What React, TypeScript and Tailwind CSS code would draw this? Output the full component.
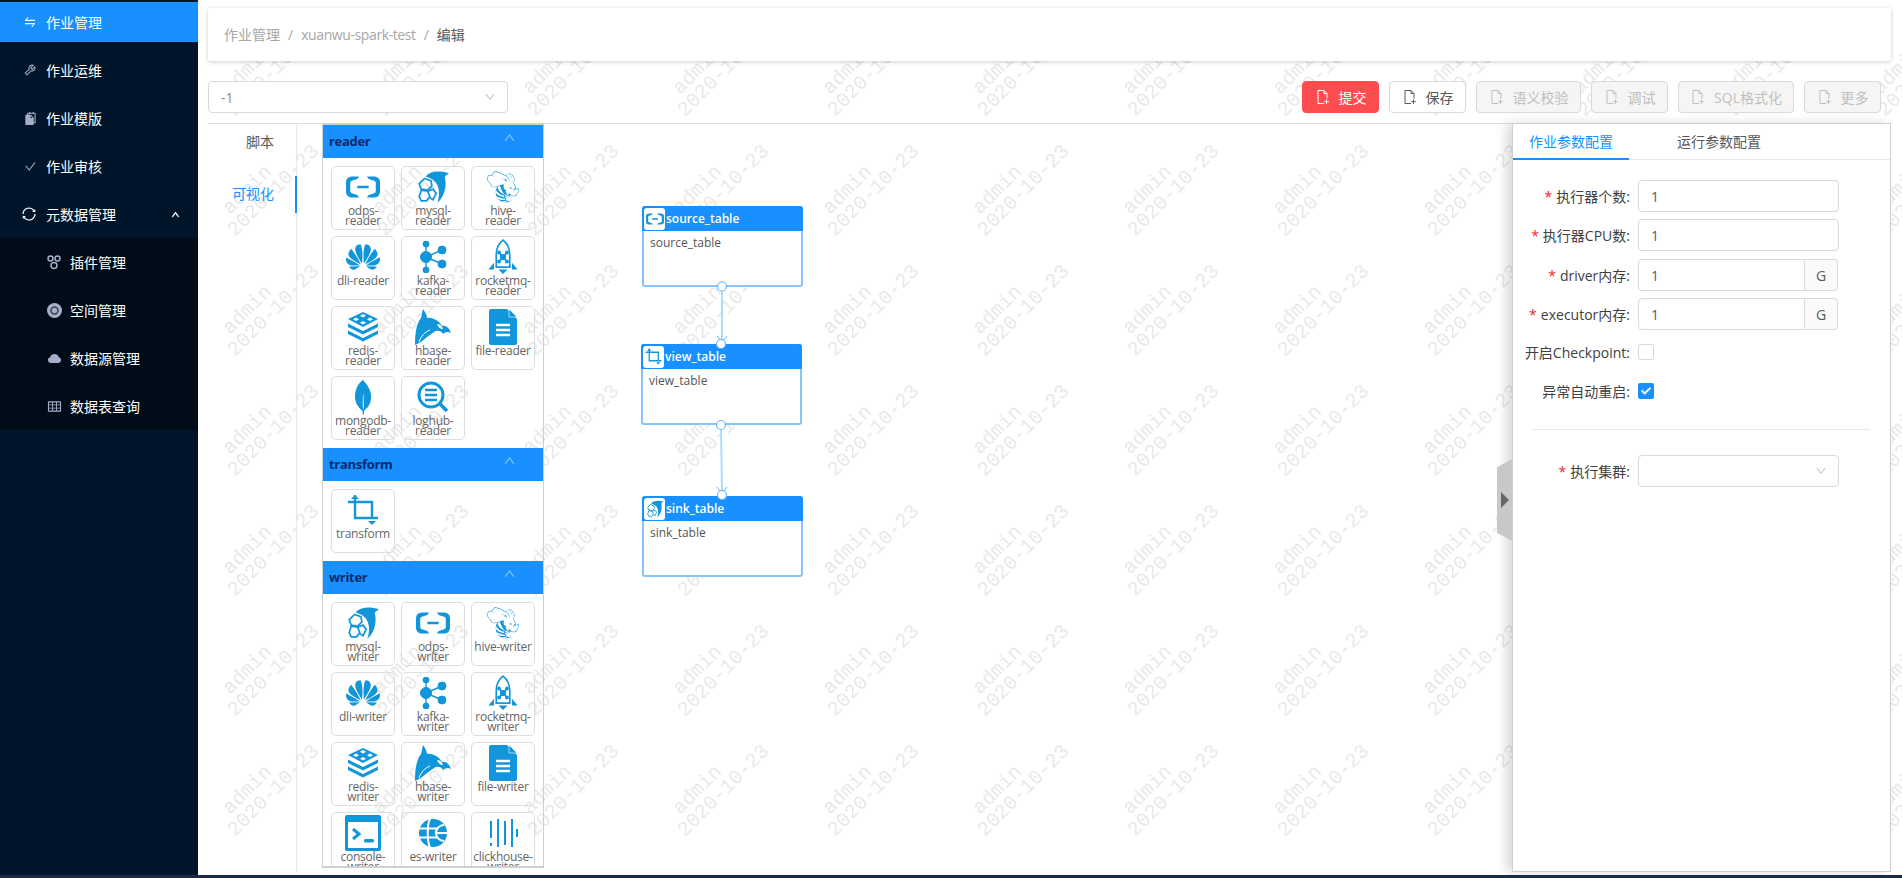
import React from "react";
import { AiOutlineSwap, AiOutlineTool, AiOutlineCheck, AiOutlineSync, AiFillCloud, AiOutlineTable, AiOutlineDown, AiOutlineUp, AiFillSnippets } from "react-icons/ai";
import { FaCheck } from "react-icons/fa";
import { SiAlibabacloud, SiApachehive, SiHuawei, SiMongodb } from "react-icons/si";

const ui = { fontFamily: '"Open Sans","Noto Sans CJK SC",sans-serif' };
const B = "#1296db";

function Rocket({ size = 36 }: { size?: number }) {
  return (
    <svg width={size} height={size} viewBox="0 0 32 32" fill="none" stroke={B} strokeWidth="1.5">
      <path d="M16 1c4 3 6 8 6 13v11H10V14c0-5 2-10 6-13z" />
      <path d="M12.5 12l7 8M19.5 12l-7 8" />
      <circle cx="16" cy="16" r="2" fill={B} />
      <circle cx="12.5" cy="12" r="1" fill={B} />
      <circle cx="19.5" cy="12" r="1" fill={B} />
      <circle cx="12.5" cy="20" r="1" fill={B} />
      <circle cx="19.5" cy="20" r="1" fill={B} />
      <path d="M3 27l5-6v6zM29 27l-5-6v6zM12 27h8l-4 4z" fill={B} stroke="none" />
    </svg>
  );
}
function Dolphin({ size = 34 }: { size?: number }) {
  return (
    <svg width={size} height={size} viewBox="0 0 32 32">
      <path d="M9 6C13 1 22 0 31 3l-4 3c2 7 1 18-7 25 3-8 2-17-3-21-2-2-5-3-8-4z" fill={B} />
      <g fill="none" stroke={B} strokeWidth="1.6">
        <path d="M8 8l6 2 1 5-4 4-6-1-2-5z" />
        <path d="M5 19l6 1 2 5-3 4H5l-2-4z" />
        <path d="M11 20l5-2 3 4-3 6-3-2" />
      </g>
    </svg>
  );
}
function Redis({ size = 32 }: { size?: number }) {
  return (
    <svg width={size} height={size} viewBox="0 0 32 32" fill={B}>
      <path d="M16 1l15 7-15 8L1 8z" />
      <path d="M1 12.5L16 20l15-7.500V16l-15 7.500L1 16z" />
      <path d="M1 19.500L16 27l15-7.500V23l-15 7.500L1 23z" />
      <g fill="#fff">
        <path d="M16 3l3 1.800-3 1.800-3-1.800z" />
        <path d="M9 6.500l3 1.800-3 1.800-3-1.800z" />
        <path d="M23 6.500l3 1.800-3 1.800-3-1.800z" />
        <path d="M16 10l3 1.800-3 1.800-3-1.800z" />
      </g>
    </svg>
  );
}
function Kafka({ size = 32 }: { size?: number }) {
  return (
    <svg width={size * 0.875} height={size} viewBox="0 0 28 32" fill={B} stroke={B}>
      <path d="M7 3v26M7 16L23 9M7 16l16 7" strokeWidth="1.4" fill="none" />
      <circle cx="7" cy="3" r="3" />
      <circle cx="7" cy="16" r="5.500" />
      <circle cx="23" cy="9" r="4" />
      <circle cx="23" cy="23" r="4" />
      <circle cx="7" cy="29" r="3" />
    </svg>
  );
}
function Orca({ size = 36 }: { size?: number }) {
  return (
    <svg width={size} height={size} viewBox="0 0 36 36" fill={B}>
      <path d="M8 0c2 3 4 6 4 9 6-1 12 3 15 8 3-1 7 1 9 7-3-2-6-1-8 1-2-4-6-4-9-2-5 3-9 7-13 10l-6 3c0-10 1-21 6-27 1-3 1-6 2-9z" />
      <path d="M22 15c3 0 5 2 6 5-3 0-5-2-6-5z" fill="#fff" />
      <path d="M4 33c2-6 6-10 11-12" fill="none" stroke="#fff" strokeWidth="1" />
    </svg>
  );
}
function FileDoc({ size = 36 }: { size?: number }) {
  return (
    <svg width={size} height={size} viewBox="0 0 28 36">
      <path d="M2 0h16l10 10v24a2 2 0 0 1-2 2H2a2 2 0 0 1-2-2V2a2 2 0 0 1 2-2z" fill={B} />
      <path d="M20 0l8 8h-8z" fill={B} stroke="#fff" strokeWidth=".6" />
      <path d="M7 16h14M7 21h14M7 26h14" stroke="#fff" strokeWidth="2.600" />
    </svg>
  );
}
function Loghub({ size = 32 }: { size?: number }) {
  return (
    <svg width={size} height={size} viewBox="0 0 32 32" fill="none" stroke={B}>
      <circle cx="14" cy="14" r="12" strokeWidth="3" />
      <path d="M23 23l7 7" strokeWidth="3.500" />
      <path d="M8 9h12M8 14h12M8 19h12" strokeWidth="2.400" />
    </svg>
  );
}
function Crop({ size = 32 }: { size?: number }) {
  return (
    <svg width={size} height={size} viewBox="0 0 32 32" fill="none" stroke={B} strokeWidth="2.400">
      <path d="M1 8h24v15M8 1v23h23" />
      <path d="M4 5l4-4 4 4z" fill={B} stroke="none" />
      <path d="M21 27l4 4 4-4z" fill={B} stroke="none" />
    </svg>
  );
}
function Console({ size = 36 }: { size?: number }) {
  return (
    <svg width={size} height={size} viewBox="0 0 36 36">
      <rect width="36" height="36" rx="2" fill={B} />
      <rect x="3" y="7" width="30" height="26" fill="#fff" />
      <path d="M8 14l6 5-6 5" fill="none" stroke={B} strokeWidth="3" />
      <rect x="19" y="24" width="10" height="3.500" rx="1.500" fill={B} />
    </svg>
  );
}
function Es({ size = 28 }: { size?: number }) {
  return (
    <svg width={size} height={size} viewBox="0 0 28 28">
      <circle cx="14" cy="14" r="14" fill={B} />
      <path d="M0 9.500h18M0 18.500h18M28 14H17M25 6a8 8 0 0 0-8 8 8 8 0 0 0 8 8" fill="none" stroke="#fff" strokeWidth="2" />
      <path d="M11 0c-3 5-3 23 0 28" fill="none" stroke="#fff" strokeWidth="2" />
    </svg>
  );
}
function Clickhouse({ size = 30 }: { size?: number }) {
  return (
    <svg width={size} height={size} viewBox="0 0 30 30" stroke={B} strokeWidth="2">
      <path d="M3 3v17M3 25v3M10 1v28M17 3v24M24 1v28M29 11v8" />
    </svg>
  );
}
function FileAdd({ size = 16 }: { size?: number }) {
  return (
    <svg width={size} height={size} viewBox="0 0 16 16" fill="none" stroke="currentColor" strokeWidth="1">
      <path d="M9 14.500H3V1.500h6l3 3v5" />
      <path d="M9 1.500v3h3" />
      <path d="M11.500 10.500v4.500M9.200 12.700h4.600" />
    </svg>
  );
}

type Tile = { n: string; i: React.ReactNode };
const ali = <SiAlibabacloud size={34} color={B} />;
const hive = <SiApachehive size={32} color={B} />;
const hw = <SiHuawei size={34} color={B} />;
const R: Tile[] = [
  { n: "odps-reader", i: ali },
  { n: "mysql-reader", i: <Dolphin /> },
  { n: "hive-\nreader", i: hive },
  { n: "dli-reader", i: hw },
  { n: "kafka-reader", i: <Kafka /> },
  { n: "rocketmq-reader", i: <Rocket /> },
  { n: "redis-reader", i: <Redis /> },
  { n: "hbase-reader", i: <Orca /> },
  { n: "file-reader", i: <FileDoc /> },
  { n: "mongodb-reader", i: <SiMongodb size={36} color={B} /> },
  { n: "loghub-reader", i: <Loghub /> },
];
const W: Tile[] = [
  { n: "mysql-writer", i: <Dolphin /> },
  { n: "odps-\nwriter", i: ali },
  { n: "hive-writer", i: hive },
  { n: "dli-writer", i: hw },
  { n: "kafka-writer", i: <Kafka /> },
  { n: "rocketmq-writer", i: <Rocket /> },
  { n: "redis-\nwriter", i: <Redis /> },
  { n: "hbase-writer", i: <Orca /> },
  { n: "file-writer", i: <FileDoc /> },
  { n: "console-writer", i: <Console /> },
  { n: "es-writer", i: <Es /> },
  { n: "clickhouse-writer", i: <Clickhouse /> },
];

function TileBox({ n, i }: Tile) {
  return (
    <div className="w-[64px] h-[64px] rounded-[5px] border border-[#dddddd] flex flex-col items-center pt-[1px] overflow-hidden">
      <div className="h-[38px] shrink-0 flex items-center justify-center">{i}</div>
      <div className="text-[12px] leading-[10px] tracking-[-0.25px] text-[#666] text-center w-[62px] break-words whitespace-pre-line">{n}</div>
    </div>
  );
}
function Section({ title, tiles }: { title: string; tiles: Tile[] }) {
  return (
    <div>
      <div className="h-[33px] bg-[#1890ff] flex items-center justify-between pl-[6px] pr-[27px]">
        <span className="font-bold text-[13px] tracking-[-0.3px] text-[#0b2a6e] pt-[1px]">{title}</span>
        <AiOutlineUp size={13} color="#8cc8ff" className="mb-[8px]" />
      </div>
      <div className="grid grid-cols-[64px_64px_64px] gap-[6px] pl-[8px] pt-[8px] pb-[8px]">
        {tiles.map((t) => (
          <TileBox key={t.n} {...t} />
        ))}
      </div>
    </div>
  );
}

function Node({ name, icon, className }: { name: string; icon: React.ReactNode; className: string }) {
  return (
    <div className={"absolute w-[161px] h-[81px] rounded-[3px] border-2 border-[#85c4ff] bg-white " + className}>
      <div className="-mx-[2px] -mt-[2px] h-[25px] bg-[#1890ff] rounded-t-[3px] flex items-center text-white text-[12px] leading-none font-semibold">
        <span className="w-[21px] h-[22px] ml-[2px] bg-white rounded-[3px] flex items-center justify-center shrink-0">{icon}</span>
        <span className="ml-[1px]">{name}</span>
      </div>
      <div className="px-[6px] pt-[3px] text-[12px] text-[#555]">{name}</div>
    </div>
  );
}

function SideItem({ icon, label, active, sub }: { icon: React.ReactNode; label: string; active?: boolean; sub?: boolean }) {
  return (
    <div className={"h-[40px] flex items-center text-[14px] text-white mb-[8px] " + (active ? "bg-[#1890ff] " : "") + (sub ? "pl-[46px]" : "pl-[22px]")}>
      <span className={"w-[16px] flex justify-center mr-[8px] " + (active ? "" : "text-[#a6adc8]")}>{icon}</span>
      <span>{label}</span>
    </div>
  );
}

function Btn({ label, kind, className }: { label: string; kind: "red" | "plain" | "off"; className: string }) {
  const cls =
    kind === "red"
      ? "bg-[#ff4d4f] text-white border-[#ff4d4f]"
      : kind === "plain"
      ? "bg-white text-[#595959] border-[#d9d9d9]"
      : "bg-[#f5f5f5] text-[#bfbfbf] border-[#d9d9d9]";
  return (
    <div className={"h-[32px] rounded-[4px] border flex items-center justify-center gap-[8px] text-[14px] " + cls + " " + className}>
      <FileAdd />
      <span>{label}</span>
    </div>
  );
}

function Label({ label, req }: { label: string; req?: boolean }) {
  return (
    <div className="w-[125px] text-right text-[14px] text-[#404040] whitespace-nowrap pr-[8px]">
      {req && <span className="text-[#f5222d] mr-[4px]">*</span>}
      {label}:
    </div>
  );
}

function Field({ label, req, unit, className = "mb-[7px]" }: { label: string; req?: boolean; unit?: boolean; className?: string }) {
  return (
    <div className={"flex items-center h-[32px] " + className}>
      <Label label={label} req={req} />
      {unit ? (
        <div className="w-[200px] h-[32px] flex text-[14px] text-[#595959]">
          <div className="w-[167px] border border-[#d9d9d9] rounded-l-[4px] pl-[12px] flex items-center">1</div>
          <div className="w-[33px] border border-l-0 border-[#d9d9d9] rounded-r-[4px] bg-[#fafafa] flex items-center justify-center">G</div>
        </div>
      ) : (
        <div className="w-[201px] h-[32px] border border-[#d9d9d9] rounded-[4px] pl-[12px] flex items-center text-[14px] text-[#595959]">1</div>
      )}
    </div>
  );
}

function Watermark() {
  const marks: React.ReactNode[] = [];
  for (let k = -4; k < 8; k++) {
    for (let j = -1; j < 6; j++) {
      const x = 632 + 150 * k;
      const y = 215 + 120 * j;
      marks.push(
        <g key={k + "_" + j} transform={`rotate(-45 ${x} ${y})`}>
          <text x={x} y={y}>admin</text>
          <text x={x - 12} y={y + 19}>2020-10-23</text>
        </g>
      );
    }
  }
  return (
    <svg className="absolute inset-0 w-full h-full pointer-events-none" aria-hidden="true" fill="#e9e9e9" fontSize="20" fontFamily="'Liberation Mono',monospace">
      {marks}
    </svg>
  );
}

export default function App() {
  return (
    <div className="w-[1902px] h-[878px] flex flex-col overflow-hidden bg-white" style={ui}>
      <div className="h-[875px] flex shrink-0">
        <aside className="w-[198px] h-full bg-[#00152a] shrink-0 pt-[2px]">
          <SideItem active icon={<AiOutlineSwap size={14} />} label="作业管理" />
          <SideItem icon={<AiOutlineTool size={14} />} label="作业运维" />
          <SideItem icon={<AiFillSnippets size={15} />} label="作业模版" />
          <SideItem icon={<AiOutlineCheck size={13} />} label="作业审核" />
          <div className="h-[40px] flex items-center text-[14px] text-white pl-[21px]">
            <AiOutlineSync size={16} className="mr-[9px]" />
            <span>元数据管理</span>
            <AiOutlineUp size={9} stroke="currentColor" strokeWidth={80} className="ml-[55px]" />
          </div>
          <div className="bg-[#000c17] mt-[4px] pt-[4px] h-[192px]">
            <SideItem
              sub
              icon={
                <svg width="14" height="15" viewBox="0 0 14 15" fill="none" stroke="currentColor" strokeWidth="1.500">
                  <circle cx="3.500" cy="3.500" r="2.500" />
                  <circle cx="10.500" cy="3.500" r="2.500" />
                  <circle cx="7" cy="10.500" r="3" />
                </svg>
              }
              label="插件管理"
            />
            <SideItem
              sub
              icon={
                <svg width="15" height="15" viewBox="0 0 15 15">
                  <circle cx="7.500" cy="7.500" r="7.500" fill="currentColor" />
                  <circle cx="7.500" cy="7.500" r="3.500" fill="none" stroke="#3a3f55" strokeWidth="1.500" />
                </svg>
              }
              label="空间管理"
            />
            <SideItem sub icon={<AiFillCloud size={15} />} label="数据源管理" />
            <SideItem sub icon={<AiOutlineTable size={15} />} label="数据表查询" />
          </div>
        </aside>

        <main className="relative flex-1 h-full overflow-hidden">
          <Watermark />
          <div className="relative h-full pl-[10px] pr-[11px] pt-[8px] flex flex-col">
            <div className="h-[53px] bg-white rounded-[2px] shadow-[0_1px_4px_rgba(0,0,0,0.2)] flex items-center pl-[16px] text-[14px] text-[#a6a6a6] shrink-0">
              作业管理<span className="mx-[8px]">/</span>
              <span className="tracking-[-0.4px]">xuanwu-spark-test</span>
              <span className="mx-[8px]">/</span>
              <span className="text-[#595959]">编辑</span>
            </div>

            <div className="mt-[20px] h-[32px] flex items-center shrink-0">
              <div className="w-[300px] h-[32px] border border-[#d9d9d9] rounded-[4px] flex items-center justify-between pl-[12px] pr-[11px] text-[14px] text-[#8c8c8c] bg-white">
                <span>-1</span>
                <AiOutlineDown size={12} color="#bfbfbf" />
              </div>
              <div className="ml-auto flex mr-[10px] gap-[10px]">
                <Btn kind="red" label="提交" className="w-[77px]" />
                <Btn kind="plain" label="保存" className="w-[77px]" />
                <Btn kind="off" label="语义校验" className="w-[105px]" />
                <Btn kind="off" label="调试" className="w-[77px]" />
                <Btn kind="off" label="SQL格式化" className="w-[116px]" />
                <Btn kind="off" label="更多" className="w-[77px]" />
              </div>
            </div>

            <div className="mt-[10px] flex-1 min-h-0 border-t border-[#e0e0e0] flex relative">
              <div className="w-[89px] shrink-0 border-r border-[#e8e8e8] relative text-[14px] h-[748px] text-right pr-[22px]">
                <div className="h-[34px] flex items-center justify-end text-[#595959]">脚本</div>
                <div className="h-[36px] mt-[17px] flex items-center justify-end text-[#1890ff]">可视化</div>
                <div className="absolute right-[-1px] top-[52px] w-[2px] h-[37px] bg-[#1890ff]" />
              </div>

              <div className="ml-[25px] -mt-[1px] w-[222px] h-[745px] border border-y-2 border-[#cfcfcf] overflow-hidden shrink-0">
                <Section title="reader" tiles={R} />
                <Section title="transform" tiles={[{ n: "transform", i: <Crop /> }]} />
                <Section title="writer" tiles={W} />
              </div>

              <div className="flex-1 relative">
                <Node className="left-[98px] top-[82px]" name="source_table" icon={<SiAlibabacloud size={18} color={B} />} />
                <Node className="left-[97px] top-[220px]" name="view_table" icon={<Crop size={17} />} />
                <Node className="left-[98px] top-[372px]" name="sink_table" icon={<Dolphin size={18} />} />
                <svg className="absolute left-[140px] top-[150px] w-[100px] h-[240px]" fill="none">
                  <path d="M38 17L38 66M37 155L38 217" stroke="#aedcff" strokeWidth="2" />
                  <path d="M33 62l5 6 5-6M33 213l5 6 5-6" stroke="#69b4ff" strokeWidth="1" />
                  <g fill="#fff" stroke="#69b4ff" strokeWidth="1.200">
                    <circle cx="38" cy="12.500" r="4.500" />
                    <circle cx="37" cy="70" r="4.500" />
                    <circle cx="37" cy="151" r="4.500" />
                    <circle cx="38" cy="221" r="4.500" />
                  </g>
                </svg>
              </div>

              <div className="absolute right-0 -top-[1px] w-[379px] h-[749px] bg-white border border-[#cfcfcf] shadow-[-6px_0_10px_rgba(0,0,0,0.14)]">
                <div className="absolute left-[-16px] top-[335px] w-[15px] h-[82px] bg-[#c8c8c8] [clip-path:polygon(100%_0,100%_100%,0_90%,0_10%)] flex items-center justify-center">
                  <span className="block w-0 h-0 border-y-[8px] border-y-transparent border-l-[8px] border-l-[#666]" />
                </div>
                <div className="h-[36px] border-b border-[#e8e8e8] flex text-[14px]">
                  <div className="w-[116px] h-[36px] border-b-2 border-[#1890ff] text-[#1890ff] flex items-center justify-center">作业参数配置</div>
                  <div className="ml-[32px] w-[116px] flex items-center justify-center text-[#595959]">运行参数配置</div>
                </div>
                <div className="pt-[20px]">
                  <Field req label="执行器个数" />
                  <Field req label="执行器CPU数" className="mb-[8px]" />
                  <Field req unit label="driver内存" />
                  <Field req unit label="executor内存" className="mb-[6px]" />
                  <div className="flex items-center h-[32px] mb-[7px]">
                    <Label label="开启Checkpoint" />
                    <span className="w-[16px] h-[16px] border border-[#d9d9d9] rounded-[2px]" />
                  </div>
                  <div className="flex items-center h-[32px]">
                    <Label label="异常自动重启" />
                    <span className="w-[16px] h-[16px] bg-[#1890ff] rounded-[2px] flex items-center justify-center">
                      <FaCheck size={10} color="#fff" />
                    </span>
                  </div>
                  <div className="h-px bg-[#e8e8e8] ml-[19px] mr-[20px] my-[22px]" />
                  <div className="flex items-center h-[32px] mt-[25px]">
                    <Label req label="执行集群" />
                    <div className="w-[201px] h-[32px] border border-[#d9d9d9] rounded-[4px] flex items-center justify-end pr-[11px]">
                      <AiOutlineDown size={12} color="#bfbfbf" />
                    </div>
                  </div>
                </div>
              </div>
            </div>
          </div>
        </main>
      </div>
      <div className="h-[3px] bg-[#1b2a44] shrink-0" />
    </div>
  );
}
